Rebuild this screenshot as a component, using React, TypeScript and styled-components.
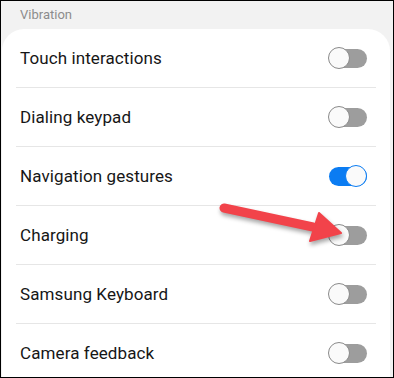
import React from "react";
import styled, { createGlobalStyle } from "styled-components";

const GlobalStyle = createGlobalStyle`
  html, body {
    margin: 0;
    padding: 0;
    background: #f2f2f2;
  }
  * {
    box-sizing: border-box;
  }
`;

export const Frame = styled.div`
  position: relative;
  width: 394px;
  height: 378px;
  border: 1px solid #000;
  background: #f2f2f2;
  overflow: hidden;
  font-family: Roboto, "Noto Sans", sans-serif;
`;
Frame.displayName = "Frame";

export const SectionLabel = styled.div`
  height: 28px;
  padding: 6px 0 0 19px;
  font-size: 13px;
  line-height: 16px;
  color: #8c8c8c;
`;
SectionLabel.displayName = "SectionLabel";

export const Card = styled.div`
  margin: 0 3px 0 1px;
  background: #fff;
  border-radius: 22px 22px 0 0;
  display: flex;
  flex-direction: column;
`;
Card.displayName = "Card";

export const Row = styled.div<{ $last?: boolean }>`
  position: relative;
  height: 59px;
  display: flex;
  align-items: center;
  justify-content: space-between;
  padding: 0 23px 1px 18px;

  &::after {
    content: "";
    display: ${({ $last }) => ($last ? "none" : "block")};
    position: absolute;
    left: 14px;
    right: 14px;
    bottom: 0;
    height: 1px;
    background: #e6e6e6;
  }
`;
Row.displayName = "Row";

export const Label = styled.span`
  font-size: 17px;
  color: #161616;
  letter-spacing: 0.1px;
`;
Label.displayName = "Label";

export const Track = styled.div<{ $on?: boolean }>`
  position: relative;
  width: 39px;
  height: 22px;
  display: flex;
  align-items: center;
  justify-content: ${({ $on }) => ($on ? "flex-end" : "flex-start")};

  &::before {
    content: "";
    position: absolute;
    left: 1px;
    right: 0;
    top: 2px;
    bottom: 1px;
    border-radius: 10px;
    background: ${({ $on }) => ($on ? "#0b7cf2" : "#9d9d9d")};
  }
`;
Track.displayName = "Track";

export const Thumb = styled.div<{ $on?: boolean }>`
  position: relative;
  width: 22px;
  height: 22px;
  border-radius: 50%;
  background: #fafafa;
  border: 1px solid ${({ $on }) => ($on ? "#0b7cf2" : "#8a8a8a")};
`;
Thumb.displayName = "Thumb";

export const ArrowLayer = styled.svg`
  position: absolute;
  left: 0;
  top: 0;
  pointer-events: none;
  filter: drop-shadow(1px 3px 2px rgba(0, 0, 0, 0.35));
`;
ArrowLayer.displayName = "ArrowLayer";

const Toggle = ({ on }: { on?: boolean }) => (
  <Track $on={on}>
    <Thumb $on={on} />
  </Track>
);

const items = [
  { label: "Touch interactions", on: false },
  { label: "Dialing keypad", on: false },
  { label: "Navigation gestures", on: true },
  { label: "Charging", on: false },
  { label: "Samsung Keyboard", on: false },
  { label: "Camera feedback", on: false },
];

export default function App() {
  return (
    <>
      <GlobalStyle />
      <Frame>
        <SectionLabel>Vibration</SectionLabel>
        <Card>
          {items.map((it, i) => (
            <Row key={it.label} $last={i === items.length - 1}>
              <Label>{it.label}</Label>
              <Toggle on={it.on} />
            </Row>
          ))}
        </Card>
        <ArrowLayer width="394" height="378" viewBox="0 0 394 378">
          <line
            x1="223"
            y1="207"
            x2="312"
            y2="226"
            stroke="#f2434a"
            strokeWidth="9"
            strokeLinecap="round"
          />
          <polygon points="318,212 340,232 309,240" fill="#f2434a" stroke="#f2434a" strokeWidth="2" strokeLinejoin="round" />
        </ArrowLayer>
      </Frame>
    </>
  );
}
